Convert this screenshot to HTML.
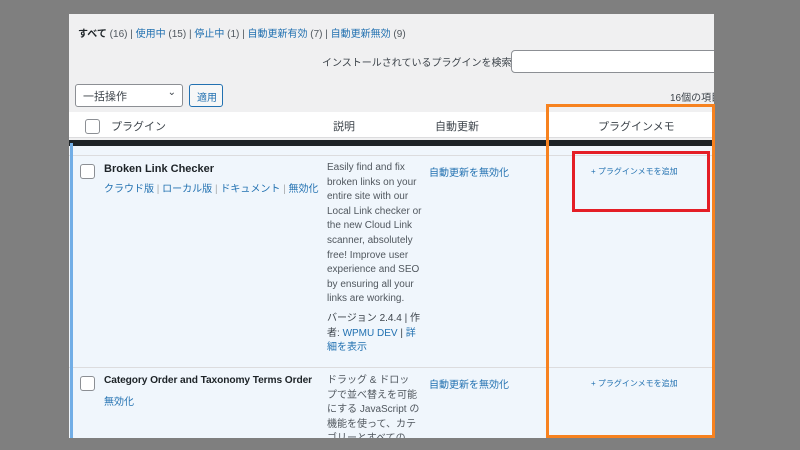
<!DOCTYPE html>
<html><head><meta charset="utf-8"><style>
*{margin:0;padding:0;box-sizing:border-box}
body{width:800px;height:450px;background:#7f7f7f;position:relative;overflow:hidden;font-family:"Liberation Sans","Noto Sans CJK JP",sans-serif;color:#3c434a}
.a{position:absolute;white-space:nowrap}
#panel{left:69px;top:14px;width:645px;height:424px;background:#f0f0f1;overflow:hidden}
.blue{color:#2271b1}
.cb{position:absolute;width:15px;height:15px;border:1px solid #8c8f94;border-radius:3px;background:#fff}
</style></head><body>
<div id="panel" class="a">
 <div class="a" style="left:9px;top:11px;font-size:10px;color:#50575e"><b style="color:#1d2327">すべて</b> (16) | <span class="blue">使用中</span> (15) | <span class="blue">停止中</span> (1) | <span class="blue">自動更新有効</span> (7) | <span class="blue">自動更新無効</span> (9)</div>
 <div class="a" style="left:253px;top:40px;font-size:10px">インストールされているプラグインを検索</div>
 <div class="a" style="left:442px;top:36px;width:210px;height:23px;background:#fff;border:1px solid #8c8f94;border-radius:4px"></div>
 <div class="a" style="left:6px;top:70px;width:108px;height:23px;background:#fff;border:1px solid #8c8f94;border-radius:3px;font-size:11px;padding:3px 0 0 7px">一括操作<span style="position:absolute;right:6px;top:2px;font-size:10px">&#8964;</span></div>
 <div class="a" style="left:120px;top:70px;width:34px;height:23px;border:1px solid #2271b1;border-radius:3px;font-size:10px;color:#2271b1;padding:4px 0 0 7px;background:#f6f7f7">適用</div>
 <div class="a" style="left:601px;top:75px;font-size:10px">16個の項目</div>
 <div class="a" style="left:0;top:98px;width:645px;height:26px;background:#fff;border-bottom:1px solid #dcdcde"></div>
 <div class="cb" style="left:16px;top:105px"></div>
 <div class="a" style="left:42px;top:104px;font-size:11px">プラグイン</div>
 <div class="a" style="left:264px;top:104px;font-size:11px">説明</div>
 <div class="a" style="left:366px;top:104px;font-size:11px">自動更新</div>
 <div class="a" style="left:529px;top:104px;font-size:11px">プラグインメモ</div>
 <div class="a" style="left:0;top:126px;width:645px;height:6px;background:#1d2327"></div>
 <div class="a" style="left:0;top:132px;width:645px;height:300px;background:#f0f6fc"></div>
 <div class="a" style="left:0;top:141px;width:645px;height:1px;background:#dcdcde"></div>
 <div class="a" style="left:0;top:353px;width:645px;height:1px;background:#dcdcde"></div>
 <div class="a" style="left:1px;top:129px;width:3px;height:300px;background:#72aee6"></div>
 <div class="cb" style="left:11px;top:150px"></div>
 <div class="a" style="left:35px;top:149px;font-size:11px;font-weight:bold;color:#1d2327">Broken Link Checker</div>
 <div class="a blue" style="left:35px;top:166px;font-size:10px">クラウド版 <span style="color:#a7aaad">|</span> ローカル版 <span style="color:#a7aaad">|</span> ドキュメント <span style="color:#a7aaad">|</span> 無効化</div>
 <div class="a" style="left:258px;top:147px;font-size:10px;line-height:14.6px;color:#50575e;white-space:normal;width:95px">Easily find and fix broken links on your entire site with our Local Link checker or the new Cloud Link scanner, absolutely free! Improve user experience and SEO by ensuring all your links are working.</div>
 <div class="a" style="left:258px;top:298px;font-size:10px;line-height:14.6px;color:#3c434a;white-space:normal;width:95px">バージョン 2.4.4 | 作者: <span class="blue">WPMU DEV</span> | <span class="blue">詳細を表示</span></div>
 <div class="a blue" style="left:360px;top:150px;font-size:10px">自動更新を無効化</div>
 <div class="a blue" style="left:522px;top:152px;font-size:8px">+ プラグインメモを追加</div>
 <div class="cb" style="left:11px;top:362px"></div>
 <div class="a" style="left:35px;top:361px;font-size:10.2px;font-weight:bold;color:#1d2327;letter-spacing:-0.1px">Category Order and Taxonomy Terms Order</div>
 <div class="a blue" style="left:35px;top:379px;font-size:10px">無効化</div>
 <div class="a" style="left:258px;top:360px;font-size:10px;line-height:14.6px;color:#50575e">ドラッグ &amp; ドロッ<br>プで並べ替えを可能<br>にする JavaScript の<br>機能を使って、カテ<br>ゴリーとすべての</div>
 <div class="a blue" style="left:360px;top:362px;font-size:10px">自動更新を無効化</div>
 <div class="a blue" style="left:522px;top:364px;font-size:8px">+ プラグインメモを追加</div>
</div>
<div class="a" style="left:546px;top:104px;width:169px;height:334px;border:3px solid #f7821f"></div>
<div class="a" style="left:572px;top:151px;width:138px;height:61px;border:3px solid #e41e26"></div>
</body></html>
